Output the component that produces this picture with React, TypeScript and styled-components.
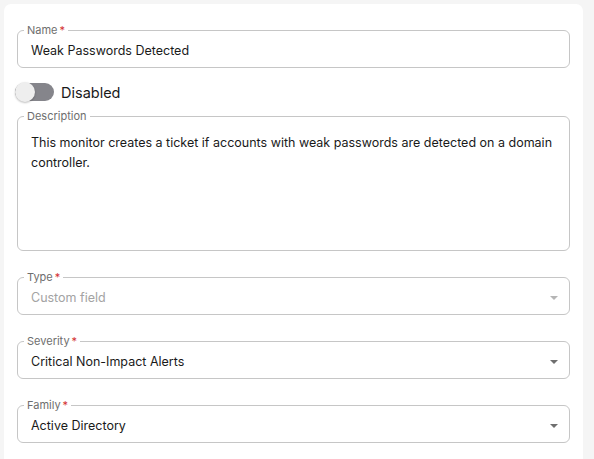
import React from 'react'
import styled, { createGlobalStyle } from 'styled-components'

const GlobalStyle = createGlobalStyle`
    html, body {
        margin: 0;
        padding: 0;
        background: #f5f5f5;
        font-family: Inter, 'Noto Sans', sans-serif;
    }
`

const Page = styled.div`
    padding: 4px 11px 0 4px;
    height: 459px;
    overflow: hidden;
    box-sizing: border-box;
`

const Card = styled.div`
    background: #ffffff;
    border-radius: 7px;
    padding: 20px 13px 40px;
    min-height: 480px;
    box-sizing: border-box;
    display: flex;
    flex-direction: column;
`

const Field = styled.fieldset<{ mt?: number }>`
    margin: ${(p) => p.mt ?? 0}px 0 0;
    padding: 0 14px 7px 13px;
    border: 1px solid #c6c6c6;
    border-radius: 6px;
    min-width: 0;
`

const Label = styled.legend`
    margin-left: -7px;
    padding: 0 3px;
    font-size: 11px;
    line-height: 13px;
    color: #6e6e6e;
`

const Required = styled.span`
    color: #d32f2f;
    margin-left: 2px;
`

const Value = styled.div<{ muted?: boolean }>`
    display: flex;
    align-items: center;
    justify-content: space-between;
    font-size: 12.5px;
    line-height: 18px;
    padding-top: 5px;
    color: ${(p) => (p.muted ? '#a3a3a3' : '#1a1a1a')};
`

const Caret = styled.span<{ muted?: boolean }>`
    width: 0;
    height: 0;
    margin-right: -3px;
    border-left: 4px solid transparent;
    border-right: 4px solid transparent;
    border-top: 4px solid ${(p) => (p.muted ? '#b5b5b5' : '#6f6f6f')};
`

const DescText = styled.div`
    font-size: 12.5px;
    line-height: 20px;
    color: #1a1a1a;
    padding-top: 10px;
    height: 110px;
`

const ToggleRow = styled.div`
    display: flex;
    align-items: center;
    gap: 7px;
    margin: 15px 0 9px -2px;
`

const Track = styled.div`
    position: relative;
    width: 39px;
    height: 18px;
    border-radius: 9px;
    background: #85858b;
`

const Thumb = styled.div`
    position: absolute;
    left: 0;
    top: -1px;
    width: 20px;
    height: 20px;
    border-radius: 50%;
    background: #eeeeee;
    box-shadow: 0 1px 2px rgba(0, 0, 0, 0.25);
`

const ToggleText = styled.span`
    font-size: 14.5px;
    color: #1a1a1a;
`

type SelectProps = {
    label: string
    value: string
    muted?: boolean
    mt: number
}

const SelectField = ({ label, value, muted, mt }: SelectProps) => (
    <Field mt={mt}>
        <Label>
            {label}
            <Required>*</Required>
        </Label>
        <Value muted={muted}>
            {value}
            <Caret muted={muted} />
        </Value>
    </Field>
)

const App = () => {
    return (
        <Page>
            <GlobalStyle />
            <Card>
                <Field>
                    <Label>
                        Name<Required>*</Required>
                    </Label>
                    <Value>Weak Passwords Detected</Value>
                </Field>
                <ToggleRow>
                    <Track>
                        <Thumb />
                    </Track>
                    <ToggleText>Disabled</ToggleText>
                </ToggleRow>
                <Field>
                    <Label>Description</Label>
                    <DescText>
                        This monitor creates a ticket if accounts with weak passwords are detected on a
                        domain controller.
                    </DescText>
                </Field>
                <SelectField label="Type" value="Custom field" muted mt={20} />
                <SelectField label="Severity" value="Critical Non-Impact Alerts" mt={20} />
                <SelectField label="Family" value="Active Directory" mt={20} />
            </Card>
        </Page>
    )
}

export default App
